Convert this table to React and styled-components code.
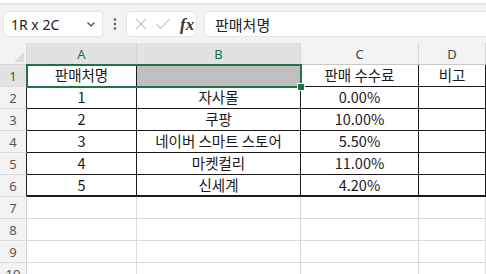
import React from "react";
import styled, { createGlobalStyle } from "styled-components";

const rows = [
  ["판매처명", "", "판매 수수료", "비고"],
  ["1", "자사몰", "0.00%", ""],
  ["2", "쿠팡", "10.00%", ""],
  ["3", "네이버 스마트 스토어", "5.50%", ""],
  ["4", "마켓컬리", "11.00%", ""],
  ["5", "신세계", "4.20%", ""],
];

const colWidths = [110, 164, 118, 67];

function App() {
  return (
    <Page>
      <GlobalStyle />
      <TopStrip />
      <Toolbar>
        <NameBox>
          <span>1R x 2C</span>
          <svg width="12" height="12" viewBox="0 0 12 12">
            <path d="M2.5 4.5 L6 8 L9.5 4.5" fill="none" stroke="#444" strokeWidth="1.2" />
          </svg>
        </NameBox>
        <Dots>
          <svg width="4" height="14" viewBox="0 0 4 14">
            <circle cx="2" cy="2.5" r="1.2" fill="#555" />
            <circle cx="2" cy="7" r="1.2" fill="#555" />
            <circle cx="2" cy="11.5" r="1.2" fill="#555" />
          </svg>
        </Dots>
        <FxBox>
          <svg width="14" height="14" viewBox="0 0 14 14">
            <path d="M2 2 L12 12 M12 2 L2 12" stroke="#c8c8c8" strokeWidth="1.2" />
          </svg>
          <svg width="16" height="14" viewBox="0 0 16 14">
            <path d="M1.5 7.5 L5.5 11.5 L14.5 2.5" fill="none" stroke="#c8c8c8" strokeWidth="1.2" />
          </svg>
          <FxLabel>fx</FxLabel>
        </FxBox>
        <FormulaInput>판매처명</FormulaInput>
      </Toolbar>

      <Sheet>
        <Corner>
          <svg width="10" height="10" viewBox="0 0 10 10">
            <path d="M10 0 L10 10 L0 10 Z" fill="#dcdcdc" />
          </svg>
        </Corner>
        {["A", "B", "C", "D"].map((c, i) => (
          <ColHead key={c} $w={colWidths[i]} $active={i < 2}>
            {c}
          </ColHead>
        ))}

        {Array.from({ length: 10 }).map((_, r) => (
          <React.Fragment key={r}>
            <RowHead $active={r === 0} $dark={r > 0 && r < 6}>
              {r + 1}
            </RowHead>
            {colWidths.map((w, c) => {
              const inTable = r < 6;
              return (
                <Cell
                  key={c}
                  $w={w}
                  $table={inTable}
                  $lastRow={r === 5}
                  $fill={r === 0 && c === 1}
                >
                  {inTable ? rows[r][c] : ""}
                </Cell>
              );
            })}
          </React.Fragment>
        ))}

        <Selection>
          <FillHandle />
        </Selection>
      </Sheet>
    </Page>
  );
}

export default App;

// Styles

const GlobalStyle = createGlobalStyle`
  html, body {
    margin: 0;
    padding: 0;
    background: #ffffff;
    overflow: hidden;
  }
  body {
    font-family: "Noto Sans CJK KR", "Noto Sans", sans-serif;
  }
`;

const Page = styled.div`
  width: 486px;
  height: 274px;
  overflow: hidden;
  background: #f3f3f3;
`;

const TopStrip = styled.div`
  height: 3px;
  background: #ffffff;
  border-bottom: 1px solid #e0e0e0;
  box-shadow: 0 1px 2px rgba(0, 0, 0, 0.06);
`;

const Toolbar = styled.div`
  display: flex;
  align-items: center;
  height: 26px;
  padding: 7px 0 6px 3px;
`;

const NameBox = styled.div`
  width: 100px;
  height: 26px;
  box-sizing: border-box;
  background: #fff;
  border: 1px solid #e6e6e6;
  border-radius: 4px;
  display: flex;
  align-items: center;
  justify-content: space-between;
  padding: 0 5px 0 7px;
  font-family: "Noto Sans", "Open Sans", sans-serif;
  font-size: 14px;
  color: #222;
`;

const Dots = styled.div`
  width: 23px;
  display: flex;
  justify-content: center;
  align-items: center;
`;

const FxBox = styled.div`
  width: 71px;
  height: 26px;
  box-sizing: border-box;
  background: #fff;
  border: 1px solid #e6e6e6;
  border-radius: 4px;
  display: flex;
  align-items: center;
  gap: 7px;
  padding: 0 0 0 7px;
`;

const FxLabel = styled.span`
  font-family: "Liberation Serif", "DejaVu Serif", serif;
  font-style: italic;
  font-weight: bold;
  font-size: 17px;
  color: #333;
  margin-left: 2px;
  line-height: 1;
`;

const FormulaInput = styled.div`
  flex: 1;
  margin-left: 7px;
  height: 26px;
  box-sizing: border-box;
  background: #fff;
  border: 1px solid #e6e6e6;
  border-right: none;
  border-radius: 4px 0 0 4px;
  display: flex;
  align-items: center;
  padding-left: 10px;
  font-size: 15px;
  color: #222;
`;

const Sheet = styled.div`
  position: relative;
  display: grid;
  grid-template-columns: 27px ${colWidths.map((w) => w + "px").join(" ")};
  grid-auto-rows: 22px;
  background: #fff;
`;

const Corner = styled.div`
  background: #f3f3f3;
  border-right: 1px solid #d4d4d4;
  border-bottom: 1px solid #d4d4d4;
  box-sizing: border-box;
  display: flex;
  align-items: flex-end;
  justify-content: flex-end;
  padding: 0 2px 2px 0;
`;

const ColHead = styled.div`
  box-sizing: border-box;
  background: ${(p) => (p.$active ? "#e2e2e2" : "#f3f3f3")};
  color: ${(p) => (p.$active ? "#1e6e43" : "#444")};
  border-right: 1px solid #d4d4d4;
  border-bottom: 1px solid #c8c8c8;
  display: flex;
  align-items: center;
  justify-content: center;
  font-family: "Noto Sans", "Open Sans", sans-serif;
  font-size: 13px;
`;

const RowHead = styled.div`
  box-sizing: border-box;
  background: ${(p) => (p.$active ? "#e2e2e2" : "#f3f3f3")};
  color: ${(p) => (p.$active ? "#1e6e43" : "#555")};
  border-right: 1px solid ${(p) => (p.$dark ? "#222" : "#d4d4d4")};
  border-bottom: 1px solid #dcdcdc;
  display: flex;
  align-items: center;
  justify-content: center;
  font-family: "Noto Sans", "Open Sans", sans-serif;
  font-size: 13px;
`;

const Cell = styled.div`
  box-sizing: border-box;
  background: ${(p) => (p.$fill ? "#bfbfbf" : "#fff")};
  border-right: 1px solid ${(p) => (p.$table ? "#1a1a1a" : "#dadada")};
  border-bottom: ${(p) => (p.$lastRow ? "2px" : "1px")} solid
    ${(p) => (p.$table ? "#1a1a1a" : "#dadada")};
  display: flex;
  align-items: center;
  justify-content: center;
  font-size: 14.5px;
  color: #1a1a1a;
  white-space: nowrap;
  overflow: hidden;
  line-height: 1;
`;

const Selection = styled.div`
  position: absolute;
  left: 26px;
  top: 21px;
  width: 276px;
  height: 24px;
  box-sizing: border-box;
  border: 2px solid #217346;
  pointer-events: none;
`;

const FillHandle = styled.div`
  position: absolute;
  right: -5px;
  bottom: -5px;
  width: 6px;
  height: 6px;
  background: #217346;
  border: 1px solid #fff;
`;
